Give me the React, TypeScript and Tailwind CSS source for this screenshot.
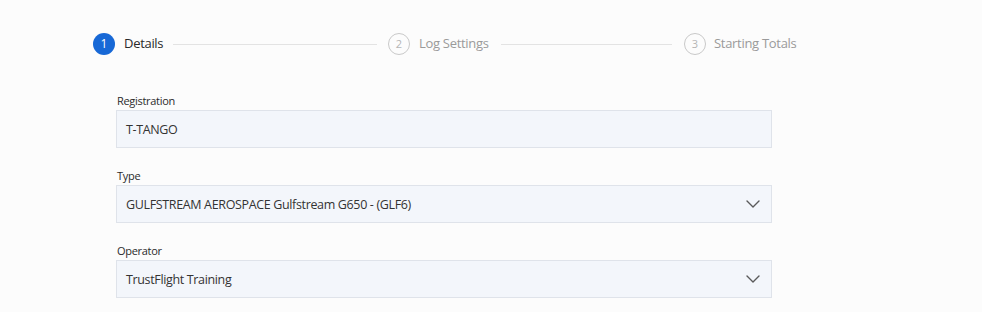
import React from "react";

const font = { fontFamily: '"Open Sans", "Noto Sans", sans-serif' };

function Chevron() {
  return (
    <svg width="14" height="8" viewBox="0 0 14 8" fill="none" className="shrink-0">
      <path d="M1 1L7 7L13 1" stroke="#5a5a5a" strokeWidth="1.4" strokeLinecap="round" strokeLinejoin="round" />
    </svg>
  );
}

function Field({ label, value, select }: { label: string; value: string; select?: boolean }) {
  return (
    <div className="flex flex-col">
      <div className="h-[18px] leading-[18px] text-[11px] tracking-[-0.3px] text-[#2b2b2b] pl-[1px]">{label}</div>
      <div className="h-[38px] flex items-center justify-between border border-[#dfe3ea] bg-[#f3f6fb] pl-[9px] pr-[11px]">
        <span className="mt-[3px] text-[12.5px] tracking-[-0.35px] text-[#333]">{value}</span>
        {select && <Chevron />}
      </div>
    </div>
  );
}

export default function App() {
  return (
    <div className="w-[982px] h-[312px] bg-[#fcfcfc] overflow-hidden" style={font}>
      <div className="pt-[33px] pl-[93px]">
        <div className="flex items-center h-[22px]">
          <div className="w-[295px] flex items-center">
            <div className="w-[22px] h-[22px] rounded-full bg-[#1768d6] text-white text-[12px] flex items-center justify-center shrink-0">1</div>
            <span className="ml-[9px] text-[13px] tracking-[-0.3px] text-[#2a2a2a] whitespace-nowrap">Details</span>
            <div className="flex-1 h-px bg-[#e3e3e3] ml-[10px] mr-[11px]" />
          </div>
          <div className="w-[296px] flex items-center">
            <div className="w-[22px] h-[22px] rounded-full border border-[#c9c9c9] text-[#b5b5b5] text-[11px] flex items-center justify-center shrink-0">2</div>
            <span className="ml-[9px] text-[13px] tracking-[-0.3px] text-[#9a9a9a] whitespace-nowrap">Log Settings</span>
            <div className="flex-1 h-px bg-[#e3e3e3] ml-[12px] mr-[12px]" />
          </div>
          <div className="flex items-center">
            <div className="w-[22px] h-[22px] rounded-full border border-[#c9c9c9] text-[#b5b5b5] text-[11px] flex items-center justify-center shrink-0">3</div>
            <span className="ml-[8px] text-[13px] tracking-[-0.3px] text-[#9a9a9a] whitespace-nowrap">Starting Totals</span>
          </div>
        </div>
      </div>
      <div className="ml-[116px] w-[656px] mt-[37px] flex flex-col gap-[19px]">
        <Field label="Registration" value="T-TANGO" />
        <Field label="Type" value="GULFSTREAM AEROSPACE Gulfstream G650 - (GLF6)" select />
        <Field label="Operator" value="TrustFlight Training" select />
      </div>
    </div>
  );
}
